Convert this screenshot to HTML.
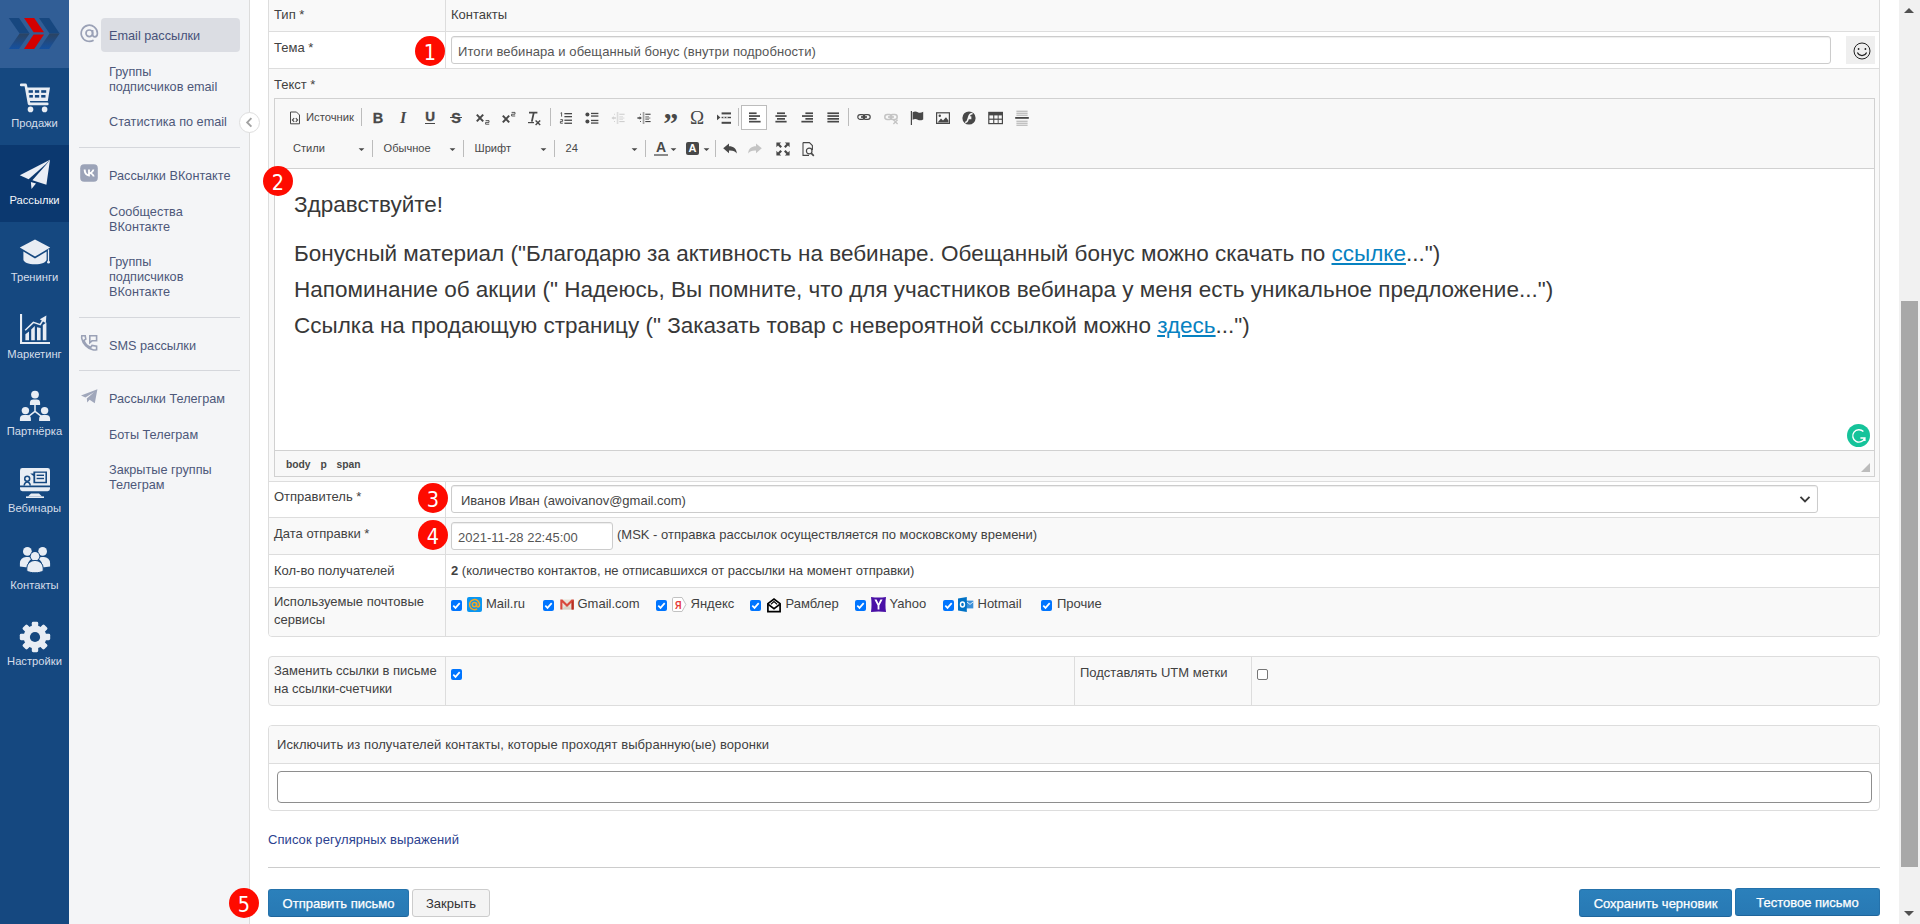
<!DOCTYPE html>
<html lang="ru"><head><meta charset="utf-8"><title>Email рассылки</title>
<style>
*{box-sizing:border-box}
html,body{margin:0;padding:0}
body{width:1920px;height:924px;overflow:hidden;background:#fff;position:relative;font:13px/18px "Liberation Sans",sans-serif;color:#414141}
.abs{position:absolute}
#nav{position:absolute;left:0;top:0;width:69px;height:924px;background:#154880}
#logo{position:absolute;left:0;top:0;width:69px;height:68px;background:#315e96}
.ni{position:absolute;left:0;width:69px;height:77px;color:#d6deea;font-size:11.200px;text-align:center}
.ni.act{background:#0b386f;color:#f4f6fa}
.ni span{position:absolute;left:0;width:69px;top:47px;line-height:16px}
.ni svg{position:absolute;left:0;top:0}
#sub{position:absolute;left:69px;top:0;width:181px;height:924px;background:#f4f5f7;border-right:1px solid #dcdcdc}
.si{position:absolute;left:40px;color:#4d587a;font-size:12.700px;line-height:15px;white-space:nowrap}
.sep{position:absolute;left:10px;width:161px;height:1px;background:#d5d7dc}
#main{position:absolute;left:250px;top:0;width:1648px;height:924px;background:#fff}
.row{position:absolute;left:268px;width:1612px;border:1px solid #ddd;border-top:none}
.lbl{position:absolute;left:274px;white-space:nowrap}
.circ{position:absolute;width:30px;height:30px;border-radius:15px;background:#fe0b00;color:#fff;font:21.500px/33px "DejaVu Sans Condensed","DejaVu Sans","Liberation Sans",sans-serif;text-align:center}

.cell{position:absolute;border:0 solid #ddd}
.t{position:absolute;white-space:nowrap;line-height:18px}
.inp{position:absolute;background:#fff;border:1px solid #ccc;border-radius:3px;box-shadow:inset 0 1px 1px rgba(0,0,0,.075);color:#555;white-space:nowrap;overflow:hidden}
.cb{position:absolute;width:11px;height:11px;border-radius:2px;background:#0075ff}
.cb svg{position:absolute;left:0;top:0}
.cbe{position:absolute;width:11px;height:11px;border-radius:2px;background:#fff;border:1px solid #767676}
.btn{position:absolute;height:28px;border-radius:3px;border:1px solid #2572ab;border-bottom-color:#1f659b;background:linear-gradient(#2b80bb,#2879b4);color:#fff;-webkit-text-stroke:.25px #fff;font-size:13px;line-height:27px;text-align:center;white-space:nowrap}
.btn.def{background:#f4f4f4;border-color:#ccc;color:#333;-webkit-text-stroke:0}
.tb{position:absolute}
.tsep{position:absolute;width:1px;height:20px;background:#bcbcbc}
.ct{position:absolute;font-size:12px;line-height:14px;color:#484848;white-space:nowrap}
.car{position:absolute;width:0;height:0;border:3px solid transparent;border-top-color:#484848;border-bottom:0}
#ed p{margin:0}
#ed a{color:#0782c1;text-decoration:underline}
</style></head>
<body>
<div id="nav">
<div id="logo"><svg width="69" height="68" viewBox="0 0 69 68">
<defs><linearGradient id="lg" x1="0" y1="0" x2="0" y2="1"><stop offset="0" stop-color="#2b4361"/><stop offset="1" stop-color="#1551a0"/></linearGradient></defs>
<polygon points="8.8,18 19,18 29.6,33.5 19.6,33.5" fill="#17477f"/><polygon points="19.6,33.5 29.6,33.5 19,49 8.8,49" fill="url(#lg)"/>
<polygon points="24,18 34.2,18 44,32.2 33.6,32.2" fill="#d40000"/><polygon points="33.6,34.6 44,34.6 34.2,49 24,49" fill="#d40000"/>
<polygon points="39,18 49.2,18 59.6,33.5 49.6,33.5" fill="#17477f"/><polygon points="49.6,33.5 59.6,33.5 49.2,49 39,49" fill="url(#lg)"/>
</svg></div>
<div class="ni" style="top:68px"><svg width="69" height="50" viewBox="0 0 69 50" fill="#e8edf4">
<path d="M21.2 15.6h4.2a1.6 1.6 0 0 1 1.6 1.3l.5 2.6H50l-2.2 13.4H29.9l.4 1.7h17a1.3 1.3 0 0 1 0 2.6H29.2a1.4 1.4 0 0 1-1.4-1.1L24.6 18.2h-3.4a1.3 1.3 0 0 1 0-2.6z"/>
<g fill="#154880"><rect x="28.6" y="22.2" width="4.3" height="2.6"/><rect x="34.9" y="22.2" width="4.3" height="2.6"/><rect x="41.2" y="22.2" width="5" height="2.6"/><rect x="29.3" y="27" width="3.6" height="2.6"/><rect x="34.9" y="27" width="4.3" height="2.6"/><rect x="41.2" y="27" width="4.3" height="2.6"/></g>
<circle cx="30.5" cy="41.4" r="2.8"/><circle cx="44.6" cy="41.4" r="2.8"/></svg><span>Продажи</span></div>
<div class="ni act" style="top:145px"><svg width="69" height="50" viewBox="0 0 69 50" fill="#eaeef5">
<polygon points="19.8,30.3 50,14.8 45.4,19.6 28.6,34.3"/><polygon points="50,14.8 46.4,39.8 32.4,35.2 45.6,20.2"/><polygon points="30.9,36.9 36,38.6 31.5,43.9"/></svg><span>Рассылки</span></div>
<div class="ni" style="top:222px"><svg width="69" height="50" viewBox="0 0 69 50" fill="#e8edf4">
<path d="M35 17.4 50.2 25.6 35 34.6 19.8 25.6z"/><path d="M23.4 29.6 35 36.4 46.6 29.6V37.4C46.6 40 41.6 42.2 35 42.2S23.4 40 23.4 37.4z"/><rect x="47.9" y="27.4" width="1.2" height="12"/><circle cx="48.5" cy="40.2" r="1.4"/></svg><span>Тренинги</span></div>
<div class="ni" style="top:299px"><svg width="69" height="50" viewBox="0 0 69 50" fill="#e8edf4">
<path d="M20 15h2.1v28H50v2.1H20z"/><path d="M25.4 35.2 29 32.4V41.2H25.4zM31.2 30.4 34.8 27V41.2H31.2zM37 28.2 40.6 29V41.2H37zM42.8 26 46.4 23.4V41.2H42.8z"/>
<path d="M25.2 31.2 33.4 23.4 40.2 25.6 43.4 20.4" fill="none" stroke="#e8edf4" stroke-width="1.5"/><polygon points="39.8,20.2 46.4,16.6 45.8,24.2"/></svg><span>Маркетинг</span></div>
<div class="ni" style="top:376px"><svg width="69" height="50" viewBox="0 0 69 50" fill="#e8edf4">
<circle cx="35" cy="18.6" r="3.9"/><path d="M29.9 29v-2.2a3.4 3.4 0 0 1 3.4-3.4h3.4a3.4 3.4 0 0 1 3.4 3.4V29z"/>
<path d="M35 29v6.6M35 35.4l-7 5.4M35 35.4l7 5.4" stroke="#e8edf4" stroke-width="1.5" fill="none"/>
<circle cx="25.4" cy="34.6" r="3.7"/><path d="M19.9 45v-2a4 4 0 0 1 4-4h3a4 4 0 0 1 4 4v2z"/>
<circle cx="44.6" cy="34.6" r="3.7"/><path d="M39.1 45v-2a4 4 0 0 1 4-4h3a4 4 0 0 1 4 4v2z"/></svg><span>Партнёрка</span></div>
<div class="ni" style="top:453px"><svg width="69" height="50" viewBox="0 0 69 50" fill="#e8edf4">
<path d="M22.4 15h25.2a2.4 2.4 0 0 1 2.4 2.4V32.4H20V17.400a2.4 2.4 0 0 1 2.4-2.400z"/><path d="M20 34.200h30v1.600a2.400 2.400 0 0 1-2.400 2.400H22.400a2.400 2.400 0 0 1-2.400-2.400z"/>
<path d="M31 40.400h8l3 3h-14z"/><rect x="26" y="43.400" width="18" height="1.600"/>
<g fill="#154880"><path d="M33.400 18.400H47v11.800H33.400V23l-3.200-2.400h3.200z"/><circle cx="27.200" cy="25.800" r="3.200"/><path d="M23.400 32.400c.4-3 2-4.200 3.800-4.200s3.400 1.200 3.800 4.200z"/></g>
<rect x="35.200" y="19.800" width="10.200" height="9"/><circle cx="27.200" cy="25.800" r="1.700"/><path d="M25 32.400c.2-1.800 1.100-2.600 2.200-2.600s2 .8 2.200 2.600z"/>
<g fill="#154880"><rect x="36.600" y="21.600" width="7.400" height="1.400"/><rect x="36.600" y="24.800" width="7.400" height="1.400"/></g></svg><span>Вебинары</span></div>
<div class="ni" style="top:530px"><svg width="69" height="50" viewBox="0 0 69 50" fill="#e8edf4">
<circle cx="27.400" cy="21.400" r="4.400"/><circle cx="42.600" cy="21.400" r="4.400"/>
<path d="M19.900 36.600v-3.400a6.200 6.200 0 0 1 6.200-6.200h2.200a6.200 6.200 0 0 1 4 1.500 8 8 0 0 0-4.600 9z"/><path d="M50.100 36.600v-3.400a6.200 6.200 0 0 0-6.200-6.200h-2.200a6.200 6.200 0 0 0-4 1.500 8 8 0 0 1 4.600 9z"/>
<circle cx="35" cy="26.200" r="5.200" fill="#154880"/><circle cx="35" cy="26.200" r="4.300"/>
<path d="M26.800 41v-3a8.200 7.600 0 0 1 16.400 0v3c-2 1.200-5 1.800-8.200 1.800s-6.200-.6-8.200-1.800z" stroke="#154880" stroke-width="1"/></svg><span>Контакты</span></div>
<div class="ni" style="top:607px"><svg width="69" height="50" viewBox="0 0 69 50"><g transform="translate(35 30)" fill="#e8edf4">
<circle r="11.400"/><g id="gt"><rect x="-3.200" y="-15.200" width="6.400" height="6" rx="1.400"/><rect x="-3.200" y="9.200" width="6.400" height="6" rx="1.400"/></g><use href="#gt" transform="rotate(45)"/><use href="#gt" transform="rotate(90)"/><use href="#gt" transform="rotate(135)"/>
<circle r="5.100" fill="#154880"/></g></svg><span style="top:45.500px">Настройки</span></div>
</div>
<div id="sub">
<div class="abs" style="left:32px;top:18px;width:139px;height:34px;border-radius:4px;background:#dbdde3"></div>
<svg class="abs" style="left:11px;top:24px" width="19" height="19" viewBox="0 0 19 19" fill="none" stroke="#9aa1b6" stroke-width="1.7"><circle cx="9.300" cy="9.300" r="3.300"/><path d="M12.600 6v4.600c0 1.500 1 2.300 2.300 2.300 1.500 0 2.500-1.300 2.500-3.600A8.100 8.100 0 1 0 13.600 16.200"/></svg>
<div class="si" style="top:28.5px;color:#47527a">Email рассылки</div>
<div class="si" style="top:64.5px">Группы<br>подписчиков email</div>
<div class="si" style="top:114.5px">Статистика по email</div>
<div class="sep" style="top:147px"></div>
<svg class="abs" style="left:11px;top:164px" width="18" height="18" viewBox="0 0 18 18"><rect x=".2" y=".2" width="17.600" height="17.600" rx="4" fill="#9ba3b8"/><path fill="#fff" d="M9.600 12.400c-3.700 0-5.800-2.500-5.900-6.800h1.900c.1 3.100 1.400 4.400 2.500 4.700V5.600h1.800v2.700c1.100-.1 2.200-1.300 2.600-2.700h1.800c-.3 1.700-1.500 2.900-2.400 3.400.9.400 2.200 1.500 2.700 3.400h-1.900c-.4-1.300-1.500-2.300-2.800-2.400v2.400z"/></svg>
<div class="si" style="top:168.5px">Рассылки ВКонтакте</div>
<div class="si" style="top:204.5px">Сообщества<br>ВКонтакте</div>
<div class="si" style="top:254.5px">Группы<br>подписчиков<br>ВКонтакте</div>
<div class="sep" style="top:317px"></div>
<svg class="abs" style="left:11px;top:334px" width="18" height="18" viewBox="0 0 18 18" fill="none" stroke="#9aa1b6" stroke-width="1.600"><path d="M1.800 1.800h3.400l.6 3.400-1.800 1.200c1 3.200 3.600 5.800 6.800 6.800l1.200-1.800 4.600.7v3.700c-1.200.3-2.600.4-3.800 0C7.400 14.400 2.800 9.800 1.800 4.600c-.2-1-.2-1.900 0-2.800z"/><path d="M9.800 1.800h6.800v5H12l-2.200 2z"/></svg>
<div class="si" style="top:338.5px">SMS рассылки</div>
<div class="sep" style="top:370px"></div>
<svg class="abs" style="left:11px;top:388px" width="18" height="18" viewBox="0 0 18 18" fill="#a0a7bb"><path d="M1 7.600 17.400 1.200 14.800 15.200 9.600 11.800 7.200 14.600 6.800 10.400 14 4.200 5.400 9.400z"/></svg>
<div class="si" style="top:391.5px">Рассылки Телеграм</div>
<div class="si" style="top:427.5px">Боты Телеграм</div>
<div class="si" style="top:462.5px">Закрытые группы<br>Телеграм</div>
</div>
<div class="abs" style="left:239px;top:112px;width:21px;height:21px;border-radius:11px;background:#fff;border:1px solid #dedede;z-index:5"><svg class="abs" style="left:5px;top:4px" width="9" height="11" viewBox="0 0 9 11" fill="none" stroke="#a2a2a2" stroke-width="1.900"><path d="M6.400 1.200 2.200 5.400 6.400 9.600"/></svg></div>
<div id="main"></div>
<!-- table 1 -->
<div class="abs" style="left:268px;top:-5px;width:1612px;height:642px;border:1px solid #ddd;border-radius:4px;background:#fff"></div>
<div class="abs" style="left:269px;top:0;width:1610px;height:31px;background:#f9f9f9"></div>
<div class="abs" style="left:269px;top:31px;width:1610px;height:1px;background:#ddd"></div>
<div class="abs" style="left:269px;top:68px;width:1610px;height:1px;background:#ddd"></div>
<div class="abs" style="left:269px;top:69px;width:1610px;height:412px;background:#f9f9f9"></div>
<div class="abs" style="left:269px;top:481px;width:1610px;height:1px;background:#ddd"></div>
<div class="abs" style="left:269px;top:517px;width:1610px;height:1px;background:#ddd"></div>
<div class="abs" style="left:269px;top:518px;width:1610px;height:36px;background:#f9f9f9"></div>
<div class="abs" style="left:269px;top:554px;width:1610px;height:1px;background:#ddd"></div>
<div class="abs" style="left:269px;top:587px;width:1610px;height:1px;background:#ddd"></div>
<div class="abs" style="left:269px;top:588px;width:1610px;height:48px;background:#f9f9f9;border-radius:0 0 3px 3px"></div>
<div class="abs" style="left:445px;top:0;width:1px;height:68px;background:#ddd"></div>
<div class="abs" style="left:445px;top:482px;width:1px;height:154px;background:#ddd"></div>
<div class="t" style="left:274px;top:6px">Тип *</div>
<div class="t" style="left:451px;top:6px">Контакты</div>
<div class="t" style="left:274px;top:39px">Тема *</div>
<div class="inp" style="left:451px;top:36px;width:1380px;height:28px;padding:6px 6px;line-height:17px;letter-spacing:.085px">Итоги вебинара и обещанный бонус (внутри подробности)</div>
<div class="abs" style="left:1846px;top:36px;width:29px;height:28px;background:#efefef"><svg class="abs" style="left:6.500px;top:5.500px" width="18" height="18" viewBox="0 0 18 18" fill="none" stroke="#222" stroke-width="1"><circle cx="9" cy="9" r="8"/><path d="M4.400 10.600c1 2.200 2.800 3 4.600 3s3.600-.8 4.600-3" stroke-width="1.100"/><circle cx="5.600" cy="7" r=".9" fill="#222" stroke="none"/><circle cx="12.400" cy="7" r=".9" fill="#222" stroke="none"/></svg></div>
<div class="t" style="left:274px;top:76px">Текст *</div>
<!-- editor -->
<div class="abs" style="left:274px;top:98px;width:1601px;height:379px;border:1px solid #d1d1d1;background:#fff"></div>
<div class="abs" style="left:275px;top:99px;width:1599px;height:69px;background:#f8f8f8"></div>
<div class="abs" style="left:275px;top:168px;width:1599px;height:1px;background:#d1d1d1"></div>
<div class="abs" style="left:275px;top:450px;width:1599px;height:1px;background:#d1d1d1"></div>
<div class="abs" style="left:275px;top:451px;width:1599px;height:25px;background:#f8f8f8"></div>
<div id="tbar"><svg class="tb" style="left:287px;top:109.5px" width="16" height="16" viewBox="0 0 16 16" ><path d="M3.500 2h6l3 3v8.800h-9z" fill="none" stroke="#484848" stroke-width="1"/><path d="M7.200 8.200 5.400 10l1.800 1.800M8.800 8.200 10.600 10 8.800 11.800" fill="none" stroke="#484848" stroke-width="1.100"/></svg>
<div class="ct" style="left:306px;top:109.500px;font-size:11.250px">Источник</div>
<div class="tsep" style="left:361px;top:108px;height:18px"></div>
<div class="tb" style="left:368px;top:108.5px;width:20px;height:18px;line-height:18px;text-align:center;font-size:14.500px;color:#484848;font-weight:bold;-webkit-text-stroke:.3px #484848">B</div>
<div class="tb" style="left:393px;top:108.5px;width:20px;height:18px;line-height:18px;text-align:center;font-size:16px;color:#484848;font-weight:bold;font-style:italic;font-family:'Liberation Serif',serif">I</div>
<div class="tb" style="left:420px;top:107.5px;width:20px;height:18px;line-height:18px;text-align:center;font-size:13.500px;color:#484848;font-weight:bold;-webkit-text-stroke:.4px #484848">U</div>
<div class="tb" style="left:425px;top:122.500px;width:10px;height:1.300px;background:#484848"></div>
<div class="tb" style="left:446px;top:108.5px;width:20px;height:18px;line-height:18px;text-align:center;font-size:14.500px;color:#484848;font-weight:bold;-webkit-text-stroke:.3px #484848">S</div>
<div class="tb" style="left:450px;top:117px;width:12px;height:1.200px;background:#484848"></div>
<svg class="tb" style="left:475px;top:109.5px" width="16" height="16" viewBox="0 0 16 16" ><path d="M1.800 4.600 8.200 11.400M8.200 4.600 1.800 11.400" stroke="#484848" stroke-width="2" fill="none"/><path d="M10.600 10.600h3.400v1.800h-3.400v1.800h3.600" stroke="#484848" stroke-width=".9" fill="none"/></svg>
<svg class="tb" style="left:501px;top:109.5px" width="16" height="16" viewBox="0 0 16 16" ><path d="M1.800 5.600 8.200 12.400M8.200 5.600 1.800 12.400" stroke="#484848" stroke-width="2" fill="none"/><path d="M10.600 2.400h3.400v1.800h-3.400v1.800h3.600" stroke="#484848" stroke-width=".9" fill="none"/></svg>
<svg class="tb" style="left:525.700px;top:109.500px" width="16" height="16" viewBox="0 0 16 16" ><path d="M3 2.600h8.400M7.800 2.600 5.800 11.600" stroke="#484848" stroke-width="1.800" fill="none"/><path d="M2 12.600h6" stroke="#484848" stroke-width="1.200"/><path d="M9.600 10.400 14.200 15M14.200 10.400 9.600 15" stroke="#484848" stroke-width="1.400" fill="none"/></svg>
<div class="tsep" style="left:550px;top:108px;height:18px"></div>
<svg class="tb" style="left:557.5px;top:110px" width="16" height="16" viewBox="0 0 16 16" ><path d="M2.600 3.200 3.600 2.600V6.600M2.400 9.600h2.200v1.800H2.400v1.800h2.400" stroke="#484848" stroke-width=".9" fill="none"/><rect x="6.4" y="3" width="7.6" height="1.3" fill="#484848"/><rect x="6.4" y="6" width="7.6" height="1.3" fill="#484848"/><rect x="6.4" y="9.6" width="7.6" height="1.3" fill="#484848"/><rect x="6.4" y="12.6" width="7.6" height="1.3" fill="#484848"/></svg>
<svg class="tb" style="left:584px;top:110px" width="16" height="16" viewBox="0 0 16 16" ><circle cx="3.400" cy="4.400" r="2" fill="#484848"/><circle cx="3.400" cy="11.400" r="2" fill="#484848"/><rect x="7" y="2.8" width="7.4" height="1.3" fill="#484848"/><rect x="7" y="5.4" width="7.4" height="1.3" fill="#484848"/><rect x="7" y="9.8" width="7.4" height="1.3" fill="#484848"/><rect x="7" y="12.4" width="7.4" height="1.3" fill="#484848"/></svg>
<svg class="tb" style="left:609.500px;top:110px" width="16" height="16" viewBox="0 0 16 16"><rect x="6.700" y="2" width="1.700" height="12" fill="#dcdcdc"/><rect x="9.300" y="3.7" width="5.3" height="1.100" fill="#cfcfcf"/><rect x="9.300" y="6.2" width="3.7" height="1.100" fill="#dedede"/><rect x="9.300" y="7.5" width="5.1" height="1.100" fill="#dedede"/><rect x="9.300" y="8.8" width="3.7" height="1.100" fill="#dedede"/><rect x="9.300" y="11" width="5.3" height="1.100" fill="#cfcfcf"/><rect x="4" y="3.800" width="1" height=".9" fill="#cfcfcf"/><rect x="4" y="11.100" width="1" height=".9" fill="#cfcfcf"/><path d="M1.400 8 3.700 6.300V7.300H5.900V8.700H3.700V9.700z" fill="#cfcfcf"/></svg>
<svg class="tb" style="left:636px;top:110px" width="16" height="16" viewBox="0 0 16 16"><rect x="6.700" y="2" width="1.700" height="12" fill="#a3a3a3"/><rect x="9.300" y="3.7" width="5.3" height="1.100" fill="#484848"/><rect x="9.300" y="6.2" width="3.7" height="1.100" fill="#8c8c8c"/><rect x="9.300" y="7.5" width="5.1" height="1.100" fill="#8c8c8c"/><rect x="9.300" y="8.8" width="3.7" height="1.100" fill="#8c8c8c"/><rect x="9.300" y="11" width="5.3" height="1.100" fill="#484848"/><rect x="4" y="3.800" width="1" height=".9" fill="#484848"/><rect x="4" y="11.100" width="1" height=".9" fill="#484848"/><path d="M5.900 8 3.600 6.300V7.300H1.400V8.700H3.600V9.700z" fill="#484848"/></svg>
<div class="tb" style="left:660.300px;top:109.500px;width:20px;height:26px;line-height:26px;font:bold 30px/26px 'Liberation Serif',serif;color:#484848;text-align:center;letter-spacing:-1px">”</div>
<div class="tb" style="left:687px;top:107.500px;width:20px;height:20px;font:19px/20px 'Liberation Serif',serif;color:#484848;text-align:center">Ω</div>
<svg class="tb" style="left:716px;top:110px" width="16" height="16" viewBox="0 0 16 16" ><path d="M1 4.600 4.400 7.400 1 10.200z" fill="#484848"/><rect x="5.6" y="2.4" width="9.4" height="2" fill="#484848"/><rect x="5.6" y="11.8" width="9.4" height="2" fill="#484848"/><rect x="5.600" y="6.800" width="9.400" height="1.400" fill="#484848"/><rect x="7.400" y="6.800" width="1.200" height="1.400" fill="#f8f8f8"/><rect x="10.400" y="6.800" width="1.200" height="1.400" fill="#f8f8f8"/></svg>
<div class="tsep" style="left:738px;top:108px;height:18px"></div>
<div class="tb" style="left:741px;top:105px;width:26px;height:25px;background:#fff;border:1px solid #bcbcbc"></div>
<svg class="tb" style="left:746.5px;top:110px" width="16" height="16" viewBox="0 0 16 16" ><rect x="2" y="2.4" width="7.6" height="1.7" fill="#484848"/><rect x="2" y="5.2" width="11" height="1.7" fill="#484848"/><rect x="2" y="8" width="7.6" height="1.7" fill="#484848"/><rect x="2" y="10.8" width="11.6" height="1.7" fill="#484848"/></svg>
<svg class="tb" style="left:772.5px;top:110px" width="16" height="16" viewBox="0 0 16 16" ><rect x="4" y="2.4" width="8" height="1.7" fill="#484848"/><rect x="2.4" y="5.2" width="11.2" height="1.7" fill="#484848"/><rect x="4" y="8" width="8" height="1.7" fill="#484848"/><rect x="2.4" y="10.8" width="11.2" height="1.7" fill="#484848"/></svg>
<svg class="tb" style="left:798.5px;top:110px" width="16" height="16" viewBox="0 0 16 16" ><rect x="6.4" y="2.4" width="7.6" height="1.7" fill="#484848"/><rect x="3" y="5.2" width="11" height="1.7" fill="#484848"/><rect x="6.4" y="8" width="7.6" height="1.7" fill="#484848"/><rect x="2.4" y="10.8" width="11.6" height="1.7" fill="#484848"/></svg>
<svg class="tb" style="left:824.5px;top:110px" width="16" height="16" viewBox="0 0 16 16" ><rect x="2.4" y="2.4" width="11.6" height="1.7" fill="#484848"/><rect x="2.4" y="5.2" width="11.6" height="1.7" fill="#484848"/><rect x="2.4" y="8" width="11.6" height="1.7" fill="#484848"/><rect x="2.4" y="10.8" width="11.6" height="1.7" fill="#484848"/></svg>
<div class="tsep" style="left:848px;top:108px;height:18px"></div>
<svg class="tb" style="left:855.5px;top:109.3px" width="16" height="16" viewBox="0 0 16 16" ><rect x="1.800" y="5.600" width="7" height="4.800" rx="2.400" fill="none" stroke="#484848" stroke-width="1.200"/><rect x="7.200" y="5.600" width="7" height="4.800" rx="2.400" fill="none" stroke="#484848" stroke-width="1.200"/><rect x="5" y="7.200" width="6" height="1.600" fill="#484848"/></svg>
<svg class="tb" style="left:882.5px;top:109.3px" width="16" height="16" viewBox="0 0 16 16" ><rect x="1.800" y="5.600" width="7" height="4.800" rx="2.400" fill="none" stroke="#c4c4c4" stroke-width="1.500"/><rect x="7.200" y="5.600" width="7" height="4.800" rx="2.400" fill="none" stroke="#c4c4c4" stroke-width="1.500"/><rect x="5" y="7.200" width="6" height="1.600" fill="#c4c4c4"/><path d="M10.400 10.800 14.600 15M14.600 10.800 10.400 15" stroke="#c4c4c4" stroke-width="1.300"/></svg>
<svg class="tb" style="left:909px;top:109.5px" width="16" height="16" viewBox="0 0 16 16" ><rect x="1.800" y="1" width="1.200" height="14" fill="#484848"/><path d="M3.600 2.200c2-1 3.600-.8 5.200 0s3.200.8 5.400-.4v7.600c-2.200 1.200-3.800 1.200-5.400.4s-3.200-1-5.200 0z" fill="#484848"/></svg>
<svg class="tb" style="left:934.5px;top:109.5px" width="16" height="16" viewBox="0 0 16 16" ><rect x="1.600" y="2.800" width="12.800" height="10.600" fill="none" stroke="#484848" stroke-width="1.200"/><circle cx="4.800" cy="5.800" r="1.200" fill="#484848"/><path d="M2.600 12.400 6 8.600 8 10.600 11 7.200 13.400 10.400V12.400z" fill="#484848"/></svg>
<svg class="tb" style="left:960.5px;top:109.5px" width="16" height="16" viewBox="0 0 16 16" ><circle cx="8" cy="8" r="6.600" fill="#484848"/><path d="M11.600 3.600c-2.600 0-3.400 1.600-3.900 3.400H9.600v1.400H7.300C6.800 10.600 6 12.400 4.200 12.600" stroke="#f8f8f8" stroke-width="1.500" fill="none"/></svg>
<svg class="tb" style="left:987.5px;top:109.5px" width="16" height="16" viewBox="0 0 16 16" ><rect x=".2" y="1.800" width="14.800" height="12.400" fill="#484848"/><g fill="#f8f8f8"><rect x="1.400" y="5.400" width="3.800" height="3.200"/><rect x="6.300" y="5.400" width="3.400" height="3.200"/><rect x="10.600" y="5.400" width="3.200" height="3.200"/><rect x="1.400" y="9.800" width="3.800" height="3.200"/><rect x="6.300" y="9.800" width="3.400" height="3.200"/><rect x="10.600" y="9.800" width="3.200" height="3.200"/></g></svg>
<svg class="tb" style="left:1013.5px;top:109.5px" width="16" height="16" viewBox="0 0 16 16" ><rect x="2.4" y="0.8" width="11.2" height="0.7" fill="#8a8a8a"/><rect x="2.4" y="2.8" width="11.2" height="0.7" fill="#8a8a8a"/><rect x="2.4" y="4.8" width="11.2" height="0.7" fill="#8a8a8a"/><rect x="1.200" y="7" width="13.600" height="1.800" fill="#484848"/><rect x="2.4" y="10.8" width="11.2" height="0.7" fill="#8a8a8a"/><rect x="2.4" y="12.8" width="11.2" height="0.7" fill="#8a8a8a"/><rect x="2.4" y="14.8" width="11.2" height="0.7" fill="#8a8a8a"/></svg>
<div class="ct" style="left:293px;top:141px;font-size:11.100px">Стили</div><svg class="tb" style="left:357.5px;top:147.500px" width="7" height="4" viewBox="0 0 7 4"><path d="M.6.300h5.800L3.500 3.100z" fill="#484848"/></svg><div class="tsep" style="left:372px;top:140px;height:17px"></div>
<div class="ct" style="left:383.5px;top:141px;font-size:11.100px">Обычное</div><svg class="tb" style="left:448.5px;top:147.500px" width="7" height="4" viewBox="0 0 7 4"><path d="M.6.300h5.800L3.500 3.100z" fill="#484848"/></svg><div class="tsep" style="left:463px;top:140px;height:17px"></div>
<div class="ct" style="left:474.5px;top:141px;font-size:11.100px">Шрифт</div><svg class="tb" style="left:539.5px;top:147.500px" width="7" height="4" viewBox="0 0 7 4"><path d="M.6.300h5.800L3.500 3.100z" fill="#484848"/></svg><div class="tsep" style="left:554px;top:140px;height:17px"></div>
<div class="ct" style="left:565.5px;top:141px;font-size:11.100px">24</div><svg class="tb" style="left:630.5px;top:147.500px" width="7" height="4" viewBox="0 0 7 4"><path d="M.6.300h5.800L3.500 3.100z" fill="#484848"/></svg><div class="tsep" style="left:645px;top:140px;height:17px"></div>
<div class="tb" style="left:653px;top:139px;width:16px;height:16px;font:bold 14px/16px 'Liberation Sans',sans-serif;color:#484848;text-align:center">A</div><div class="tb" style="left:654px;top:154px;width:14px;height:1.500px;background:#8a8a8a"></div>
<svg class="tb" style="left:670px;top:147.500px" width="7" height="4" viewBox="0 0 7 4"><path d="M.6.300h5.800L3.500 3.100z" fill="#484848"/></svg>
<div class="tb" style="left:686px;top:142px;width:13px;height:13px;border-radius:2px;background:#484848;font:bold 11px/13px 'Liberation Sans',sans-serif;color:#fff;text-align:center">A</div>
<svg class="tb" style="left:702.500px;top:147.500px" width="7" height="4" viewBox="0 0 7 4"><path d="M.6.300h5.800L3.500 3.100z" fill="#484848"/></svg>
<div class="tsep" style="left:715px;top:140px;height:17px"></div>
<svg class="tb" style="left:721.8px;top:140.5px" width="16" height="16" viewBox="0 0 16 16" ><path d="M1.200 7.200 7 2.400V5.200C11.400 5.200 14.600 7.400 14.800 12.600 13.400 10.200 11 9.200 7 9.400V12.200z" fill="#484848"/></svg>
<svg class="tb" style="left:747.3px;top:140.5px" width="16" height="16" viewBox="0 0 16 16" ><g transform="translate(16 0) scale(-1 1)"><path d="M1.200 7.200 7 2.400V5.200C11.400 5.200 14.600 7.400 14.800 12.600 13.400 10.200 11 9.200 7 9.400V12.200z" fill="#c4c4c4"/></g></svg>
<svg class="tb" style="left:774.5px;top:140.5px" width="16" height="16" viewBox="0 0 16 16" ><path d="M1.400 1.400h4.800L4.600 3 7 5.400 5.400 7 3 4.600 1.400 6.200zM14.600 1.400v4.800L13 4.600 10.600 7 9 5.400 11.400 3 9.800 1.400zM1.400 14.600V9.800L3 11.400 5.400 9 7 10.600 4.600 13 6.200 14.600zM14.600 14.600H9.800L11.400 13 9 10.600 10.600 9 13 11.400 14.600 9.800z" fill="#484848"/></svg>
<svg class="tb" style="left:800.3px;top:140.5px" width="16" height="16" viewBox="0 0 16 16" ><path d="M3 1.600h6.400l3 3V9M9 14.400H3V1.600" fill="none" stroke="#484848" stroke-width="1.100"/><circle cx="9.200" cy="10" r="2.800" fill="none" stroke="#484848" stroke-width="1.200"/><path d="M11.200 12.200 13.800 14.800" stroke="#484848" stroke-width="1.700"/></svg></div>
<div id="ed" class="abs" style="left:294px;top:187px;font-size:22.500px;line-height:36px;color:#383838;white-space:nowrap"><p>Здравствуйте!</p><p style="margin-top:13px">Бонусный материал ("Благодарю за активность на вебинаре. Обещанный бонус можно скачать по <a>ссылке</a>...")<br>Напоминание об акции (" Надеюсь, Вы помните, что для участников вебинара у меня есть уникальное предложение...")<br>Ссылка на продающую страницу (" Заказать товар с невероятной ссылкой можно <a>здесь</a>...")</p></div>
<div class="abs" style="left:286px;top:457.500px;font-size:10.300px;line-height:13px;font-weight:bold;color:#484848;white-space:nowrap;word-spacing:7px">body p span</div>
<svg class="abs" style="left:1860px;top:462px" width="11" height="11" viewBox="0 0 11 11"><path d="M10 1v9H1z" fill="#bcbcbc"/></svg>
<div class="abs" style="left:1847px;top:424px;width:23px;height:23px;border-radius:12px;background:#15c39a"><svg class="abs" style="left:0;top:0" width="23" height="23" viewBox="0 0 23 23" fill="none" stroke="#fff" stroke-width="1.400"><path d="M16.400 7.600A6.200 6.200 0 1 0 17.800 14H13.400M17.900 13.400V17"/></svg></div>
<!-- sender -->
<div class="t" style="left:274px;top:488px">Отправитель *</div>
<div class="inp" style="left:451px;top:485px;width:1367px;height:28px;padding:6px 9px 3px;line-height:18px;border-radius:3px;color:#444">Иванов Иван (awoivanov@gmail.com)</div>
<svg class="abs" style="left:1799px;top:495px" width="12" height="9" viewBox="0 0 12 9" fill="none" stroke="#3a3a3a" stroke-width="1.900"><path d="M1.500 1.800 6 6.300 10.500 1.800"/></svg>
<div class="t" style="left:274px;top:525px">Дата отправки *</div>
<div class="inp" style="left:451px;top:522px;width:162px;height:28px;padding:6px 6px 3px;line-height:17px">2021-11-28 22:45:00</div>
<div class="t" style="left:617px;top:526px">(MSK - отправка рассылок осуществляется по московскому времени)</div>
<div class="t" style="left:274px;top:562px">Кол-во получателей</div>
<div class="t" style="left:451px;top:562px"><b>2</b> (количество контактов, не отписавшихся от рассылки на момент отправки)</div>
<div class="t" style="left:274px;top:593px">Используемые почтовые</div><div class="t" style="left:274px;top:610.500px">сервисы</div>
<div id="svc"><div class="cb" style="left:451px;top:600px"><svg width="11" height="11" viewBox="0 0 11 11"><path d="M2.300 5.700 4.500 7.900 8.700 3.100" fill="none" stroke="#fff" stroke-width="1.700"/></svg></div>
<svg class="abs" style="left:467px;top:597px" width="15" height="15" viewBox="0 0 15 15"><rect width="15" height="15" rx="2" fill="#0a96f1"/><circle cx="7.400" cy="7.600" r="2.100" fill="none" stroke="#f5a623" stroke-width="1.500"/><path d="M9.600 5.400v3c0 1 .5 1.500 1.300 1.500 1 0 1.600-.9 1.600-2.500A5 5 0 1 0 10.100 11.900" fill="none" stroke="#f5a623" stroke-width="1.500"/></svg>
<div class="t" style="left:486px;top:595px">Mail.ru</div>
<div class="cb" style="left:543px;top:600px"><svg width="11" height="11" viewBox="0 0 11 11"><path d="M2.300 5.700 4.500 7.900 8.700 3.100" fill="none" stroke="#fff" stroke-width="1.700"/></svg></div>
<svg class="abs" style="left:559.500px;top:598.500px" width="14" height="11" viewBox="0 0 14 11"><rect x="1.500" y=".5" width="11" height="10" fill="#e6e3d8"/><path d="M2 10.500 7 5.800 12 10.500z" fill="#d7d3c6"/><path d="M.3 10.500V.4L2.400.4 7 5 11.600.4 13.700.4V10.500H11.600V3.600L7 8 2.400 3.600V10.500z" fill="#d8493b"/><path d="M11.600 3.600 13.700.4V10.500H11.600z" fill="#b63022"/></svg>
<div class="t" style="left:577.5px;top:595px">Gmail.com</div>
<div class="cb" style="left:656px;top:600px"><svg width="11" height="11" viewBox="0 0 11 11"><path d="M2.300 5.700 4.500 7.900 8.700 3.100" fill="none" stroke="#fff" stroke-width="1.700"/></svg></div>
<svg class="abs" style="left:672px;top:597px" width="15" height="15" viewBox="0 0 15 15"><path d="M1.800.5h8.200l3.900 7-3.900 7H1.800A1.300 1.300 0 0 1 .5 13.200V1.800A1.300 1.300 0 0 1 1.800.5z" fill="#fff" stroke="#c2c2c2" stroke-width="1"/><text x="3" y="12" font-family="Liberation Sans,sans-serif" font-size="11.500" font-weight="bold" fill="#e63a3a" textLength="6.500" lengthAdjust="spacingAndGlyphs">Я</text></svg>
<div class="t" style="left:690.5px;top:595px">Яндекс</div>
<div class="cb" style="left:750px;top:600px"><svg width="11" height="11" viewBox="0 0 11 11"><path d="M2.300 5.700 4.500 7.900 8.700 3.100" fill="none" stroke="#fff" stroke-width="1.700"/></svg></div>
<svg class="abs" style="left:766.500px;top:597.500px" width="14" height="15" viewBox="0 0 14 15"><path d="M.9 5.600 7 1.100 13.100 5.600V13.600H.9z" fill="#fff" stroke="#000" stroke-width="1.700"/><path d="M1.200 6.400 7 10.600 12.800 6.400" fill="none" stroke="#000" stroke-width="1.700"/><path d="M3.800 6.400 7 3.600 10.200 6.400" fill="none" stroke="#000" stroke-width="1.200"/></svg>
<div class="t" style="left:785.5px;top:595px">Рамблер</div>
<div class="cb" style="left:855px;top:600px"><svg width="11" height="11" viewBox="0 0 11 11"><path d="M2.300 5.700 4.500 7.900 8.700 3.100" fill="none" stroke="#fff" stroke-width="1.700"/></svg></div>
<svg class="abs" style="left:871px;top:597px" width="15" height="15" viewBox="0 0 15 15"><path d="M0 0C5 .8 10 .8 15 0 14.300 5 14.300 10 15 15 10 14.200 5 14.200 0 15 .7 10 .7 5 0 0z" fill="#4a10a6"/><path d="M3.400 2.600h2.200l1.900 3.800 1.900-3.800h2.200L8.400 8.400V12.600H6.600V8.400z" fill="#fff"/></svg>
<div class="t" style="left:889.5px;top:595px">Yahoo</div>
<div class="cb" style="left:943px;top:600px"><svg width="11" height="11" viewBox="0 0 11 11"><path d="M2.300 5.700 4.500 7.900 8.700 3.100" fill="none" stroke="#fff" stroke-width="1.700"/></svg></div>
<svg class="abs" style="left:958px;top:597px" width="16" height="15" viewBox="0 0 16 15"><rect x="7" y="3.600" width="8.300" height="7.800" fill="#3a8fd8"/><path d="M9 5 12 7.400 15 5" fill="none" stroke="#dcecf9" stroke-width="1"/><path d="M0 1.600 8.800 0v15L0 13.400z" fill="#0072c6"/><ellipse cx="4.500" cy="7.500" rx="2" ry="2.500" fill="none" stroke="#fff" stroke-width="1.400"/></svg>
<div class="t" style="left:977.5px;top:595px">Hotmail</div>
<div class="cb" style="left:1041px;top:600px"><svg width="11" height="11" viewBox="0 0 11 11"><path d="M2.300 5.700 4.500 7.900 8.700 3.100" fill="none" stroke="#fff" stroke-width="1.700"/></svg></div>
<div class="t" style="left:1057px;top:595px">Прочие</div></div>
<!-- table 2 -->
<div class="abs" style="left:268px;top:656px;width:1612px;height:50px;border:1px solid #ddd;border-radius:4px;background:#f9f9f9"></div>
<div class="abs" style="left:445px;top:657px;width:1px;height:48px;background:#ddd"></div>
<div class="abs" style="left:1074px;top:657px;width:1px;height:48px;background:#ddd"></div>
<div class="abs" style="left:1251px;top:657px;width:1px;height:48px;background:#ddd"></div>
<div class="t" style="left:274px;top:662px;line-height:18px">Заменить ссылки в письме<br>на ссылки-счетчики</div>
<div class="cb" style="left:451px;top:669px"><svg width="11" height="11" viewBox="0 0 11 11"><path d="M2.300 5.700 4.500 7.900 8.700 3.100" fill="none" stroke="#fff" stroke-width="1.700"/></svg></div>
<div class="t" style="left:1080px;top:664px">Подставлять UTM метки</div>
<div class="cbe" style="left:1257px;top:669px"></div>
<!-- table 3 -->
<div class="abs" style="left:268px;top:725px;width:1612px;height:86px;border:1px solid #ddd;border-radius:4px;background:#fff"></div>
<div class="abs" style="left:269px;top:726px;width:1610px;height:37px;background:#f9f9f9;border-radius:3px 3px 0 0"></div>
<div class="abs" style="left:269px;top:763px;width:1610px;height:1px;background:#ddd"></div>
<div class="t" style="left:277px;top:736px;letter-spacing:.085px">Исключить из получателей контакты, которые проходят выбранную(ые) воронки</div>
<div class="abs" style="left:277px;top:771px;width:1595px;height:32px;border:1px solid #8e8e8e;border-radius:4px;background:#fff"></div>
<div class="t" style="left:268px;top:831px;color:#2b418f;letter-spacing:.07px">Список регулярных выражений</div>
<div class="abs" style="left:268px;top:867px;width:1612px;height:1px;background:#ccc"></div>
<div class="btn" style="left:268px;top:889px;width:141px">Отправить письмо</div>
<div class="btn def" style="left:412px;top:889px;width:78px">Закрыть</div>
<div class="btn" style="left:1579px;top:889px;width:153px">Сохранить черновик</div>
<div class="btn" style="left:1735px;top:888px;width:145px">Тестовое письмо</div>
<!-- circles -->
<div class="circ" style="left:415px;top:36px">1</div>
<div class="circ" style="left:263px;top:166px">2</div>
<div class="circ" style="left:418px;top:483px">3</div>
<div class="circ" style="left:418px;top:520px">4</div>
<div class="circ" style="left:229px;top:888px">5</div>
<!-- scrollbar -->
<div class="abs" style="left:1899px;top:0;width:21px;height:924px;background:#f1f1f1"></div>
<div class="abs" style="left:1901px;top:301px;width:17px;height:566px;background:#a8a8a8"></div>
<div class="abs" style="left:1904px;top:8px;width:0;height:0;border:5px solid transparent;border-top:0;border-bottom:5px solid #505050"></div>
<div class="abs" style="left:1904px;top:911px;width:0;height:0;border:5px solid transparent;border-bottom:0;border-top:5px solid #505050"></div>

</body></html>
